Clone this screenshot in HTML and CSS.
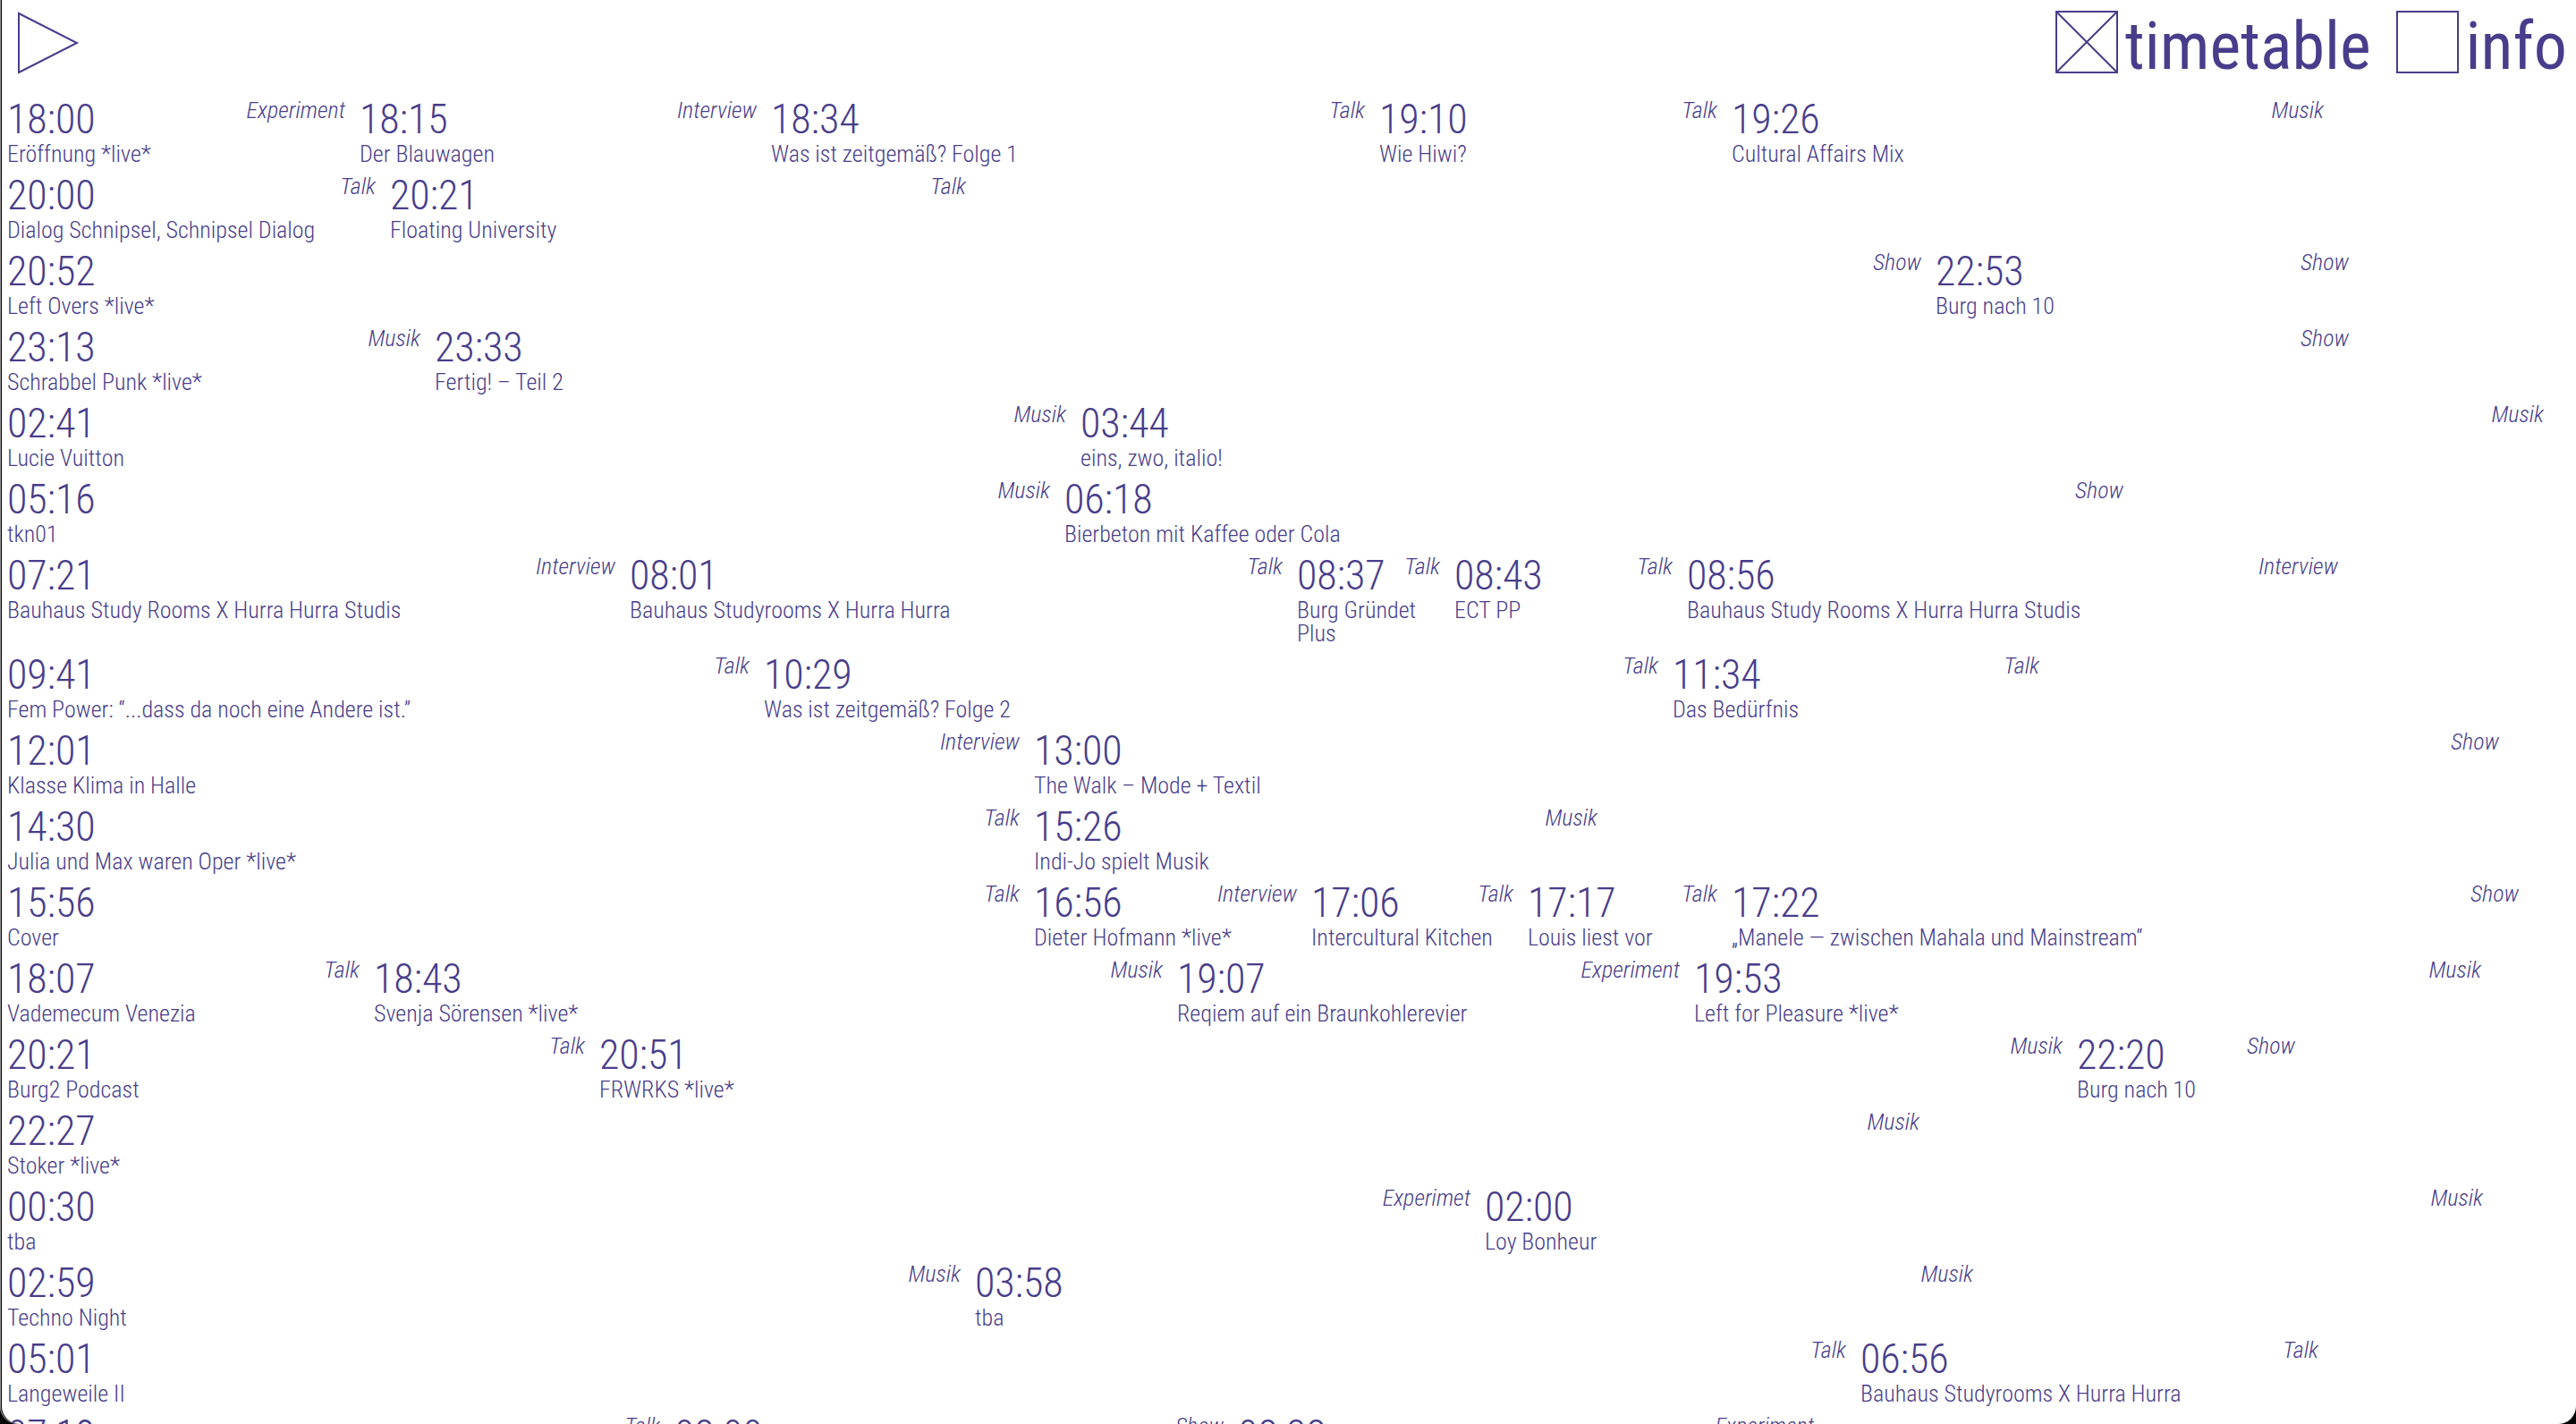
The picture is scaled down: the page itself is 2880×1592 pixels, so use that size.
FILE: index.html
```
<!DOCTYPE html>
<html lang="de">
<head>
<meta charset="utf-8">
<meta name="viewport" content="width=device-width, initial-scale=1">
<title>Timetable</title>
<link rel="stylesheet" href="styles.css">
</head>
<body>
<div class="page">
<header class="header">
  <button class="play" type="button" aria-label="Play">
    <svg class="play-icon" viewBox="0 0 72 72" aria-hidden="true"><path d="M3 3 L68 36 L3 69 Z" fill="none" stroke="currentColor" stroke-width="2"/></svg>
  </button>
  <nav class="nav">
    <label class="toggle"><input class="toggle-box" type="checkbox" checked><span class="toggle-text">timetable</span></label>
    <label class="toggle"><input class="toggle-box" type="checkbox"><span class="toggle-text">info</span></label>
  </nav>
</header>
<main class="timetable">
  <ol class="row">
    <li class="show" style="--span:197"><time class="time">18:00</time><em class="category">Experiment</em><span class="title">Eröffnung *live*</span></li>
    <li class="show" style="--span:230"><time class="time">18:15</time><em class="category">Interview</em><span class="title">Der Blauwagen</span></li>
    <li class="show" style="--span:340"><time class="time">18:34</time><em class="category">Talk</em><span class="title">Was ist zeitgemäß? Folge 1</span></li>
    <li class="show" style="--span:197"><time class="time">19:10</time><em class="category">Talk</em><span class="title">Wie Hiwi?</span></li>
    <li class="show" style="--span:339"><time class="time">19:26</time><em class="category">Musik</em><span class="title">Cultural Affairs Mix</span></li>
  </ol>
  <ol class="row">
    <li class="show" style="--span:214"><time class="time">20:00</time><em class="category">Talk</em><span class="title">Dialog Schnipsel, Schnipsel Dialog</span></li>
    <li class="show" style="--span:330"><time class="time">20:21</time><em class="category">Talk</em><span class="title">Floating University</span></li>
  </ol>
  <ol class="row">
    <li class="show" style="--span:1078"><time class="time">20:52</time><em class="category">Show</em><span class="title">Left Overs *live*</span></li>
    <li class="show" style="--span:239"><time class="time">22:53</time><em class="category">Show</em><span class="title">Burg nach 10</span></li>
  </ol>
  <ol class="row">
    <li class="show" style="--span:239"><time class="time">23:13</time><em class="category">Musik</em><span class="title">Schrabbel Punk *live*</span></li>
    <li class="show" style="--span:1078"><time class="time">23:33</time><em class="category">Show</em><span class="title">Fertig! – Teil 2</span></li>
  </ol>
  <ol class="row">
    <li class="show" style="--span:600"><time class="time">02:41</time><em class="category">Musik</em><span class="title">Lucie Vuitton</span></li>
    <li class="show" style="--span:826"><time class="time">03:44</time><em class="category">Musik</em><span class="title">eins, zwo, italio!</span></li>
  </ol>
  <ol class="row">
    <li class="show" style="--span:591"><time class="time">05:16</time><em class="category">Musik</em><span class="title">tkn01</span></li>
    <li class="show" style="--span:600"><time class="time">06:18</time><em class="category">Show</em><span class="title">Bierbeton mit Kaffee oder Cola</span></li>
  </ol>
  <ol class="row">
    <li class="show" style="--span:348"><time class="time">07:21</time><em class="category">Interview</em><span class="title">Bauhaus Study Rooms X Hurra Hurra Studis</span></li>
    <li class="show" style="--span:373"><time class="time">08:01</time><em class="category">Talk</em><span class="title">Bauhaus Studyrooms X Hurra Hurra</span></li>
    <li class="show" style="--span:88"><time class="time">08:37</time><em class="category">Talk</em><span class="title">Burg Gründet Plus</span></li>
    <li class="show" style="--span:130"><time class="time">08:43</time><em class="category">Talk</em><span class="title">ECT PP</span></li>
    <li class="show" style="--span:372"><time class="time">08:56</time><em class="category">Interview</em><span class="title">Bauhaus Study Rooms X Hurra Hurra Studis</span></li>
  </ol>
  <ol class="row">
    <li class="show" style="--span:423"><time class="time">09:41</time><em class="category">Talk</em><span class="title">Fem Power: “...dass da noch eine Andere ist.”</span></li>
    <li class="show" style="--span:508"><time class="time">10:29</time><em class="category">Talk</em><span class="title">Was ist zeitgemäß? Folge 2</span></li>
    <li class="show" style="--span:213"><time class="time">11:34</time><em class="category">Talk</em><span class="title">Das Bedürfnis</span></li>
  </ol>
  <ol class="row">
    <li class="show" style="--span:574"><time class="time">12:01</time><em class="category">Interview</em><span class="title">Klasse Klima in Halle</span></li>
    <li class="show" style="--span:827"><time class="time">13:00</time><em class="category">Show</em><span class="title">The Walk – Mode + Textil</span></li>
  </ol>
  <ol class="row">
    <li class="show" style="--span:574"><time class="time">14:30</time><em class="category">Talk</em><span class="title">Julia und Max waren Oper *live*</span></li>
    <li class="show" style="--span:323"><time class="time">15:26</time><em class="category">Musik</em><span class="title">Indi-Jo spielt Musik</span></li>
  </ol>
  <ol class="row">
    <li class="show" style="--span:574"><time class="time">15:56</time><em class="category">Talk</em><span class="title">Cover</span></li>
    <li class="show" style="--span:155"><time class="time">16:56</time><em class="category">Interview</em><span class="title">Dieter Hofmann *live*</span></li>
    <li class="show" style="--span:121"><time class="time">17:06</time><em class="category">Talk</em><span class="title">Intercultural Kitchen</span></li>
    <li class="show" style="--span:114"><time class="time">17:17</time><em class="category">Talk</em><span class="title">Louis liest vor</span></li>
    <li class="show" style="--span:448"><time class="time">17:22</time><em class="category">Show</em><span class="title">„Manele — zwischen Mahala und Mainstream“</span></li>
  </ol>
  <ol class="row">
    <li class="show" style="--span:205"><time class="time">18:07</time><em class="category">Talk</em><span class="title">Vademecum Venezia</span></li>
    <li class="show" style="--span:449"><time class="time">18:43</time><em class="category">Musik</em><span class="title">Svenja Sörensen *live*</span></li>
    <li class="show" style="--span:289"><time class="time">19:07</time><em class="category">Experiment</em><span class="title">Reqiem auf ein Braunkohlerevier</span></li>
    <li class="show" style="--span:448"><time class="time">19:53</time><em class="category">Musik</em><span class="title">Left for Pleasure *live*</span></li>
  </ol>
  <ol class="row">
    <li class="show" style="--span:331"><time class="time">20:21</time><em class="category">Talk</em><span class="title">Burg2 Podcast</span></li>
    <li class="show" style="--span:826"><time class="time">20:51</time><em class="category">Musik</em><span class="title">FRWRKS *live*</span></li>
    <li class="show" style="--span:130"><time class="time">22:20</time><em class="category">Show</em><span class="title">Burg nach 10</span></li>
  </ol>
  <ol class="row">
    <li class="show" style="--span:1077"><time class="time">22:27</time><em class="category">Musik</em><span class="title">Stoker *live*</span></li>
  </ol>
  <ol class="row">
    <li class="show" style="--span:826"><time class="time">00:30</time><em class="category">Experimet</em><span class="title">tba</span></li>
    <li class="show" style="--span:566"><time class="time">02:00</time><em class="category">Musik</em><span class="title">Loy Bonheur</span></li>
  </ol>
  <ol class="row">
    <li class="show" style="--span:541"><time class="time">02:59</time><em class="category">Musik</em><span class="title">Techno Night</span></li>
    <li class="show" style="--span:566"><time class="time">03:58</time><em class="category">Musik</em><span class="title">tba</span></li>
  </ol>
  <ol class="row">
    <li class="show" style="--span:1036"><time class="time">05:01</time><em class="category">Talk</em><span class="title">Langeweile II</span></li>
    <li class="show" style="--span:264"><time class="time">06:56</time><em class="category">Talk</em><span class="title">Bauhaus Studyrooms X Hurra Hurra</span></li>
  </ol>
  <ol class="row">
    <li class="show" style="--span:373"><time class="time">07:19</time><em class="category">Talk</em></li>
    <li class="show" style="--span:315"><time class="time">08:00</time><em class="category">Show</em></li>
    <li class="show" style="--span:330"><time class="time">08:38</time><em class="category">Experiment</em></li>
  </ol>
</main>
</div>
</body>
</html>
```
FILE: styles.css
```
* {
  box-sizing: border-box;
}

html {
  background: #000;
}

body {
  margin: 0;
  color: darkslateblue;
  font-family: "Roboto Condensed Light", "Roboto Condensed", Roboto, sans-serif;
  font-weight: 300;
}

.page {
  height: 100vh;
  overflow: hidden;
  background: #fff;
  border-radius: 0 0 20px 20px;
  box-shadow: inset 1px 0 #999, inset 2px 0 #000;
}

.header {
  display: flex;
  justify-content: space-between;
  align-items: flex-start;
  height: 108px;
  padding: 12px 10px 0 18px;
}

.play {
  padding: 0;
  border: 0;
  background: none;
  color: inherit;
  cursor: pointer;
}

.play-icon {
  display: block;
  width: 72px;
  height: 72px;
}

.nav {
  display: flex;
  gap: 28px;
}

.toggle {
  display: flex;
  align-items: flex-start;
  gap: 8px;
  font-family: "Roboto Condensed", Roboto, sans-serif;
  font-weight: 400;
  font-size: 74px;
  line-height: 80px;
  cursor: pointer;
}

.toggle-box {
  appearance: none;
  width: 70px;
  height: 70px;
  margin: 0;
  border: 2px solid darkslateblue;
  cursor: pointer;
}

.toggle-box:checked {
  background: url("data:image/svg+xml,%3Csvg xmlns='http://www.w3.org/2000/svg' viewBox='0 0 66 66'%3E%3Cpath d='M0 0L66 66M66 0L0 66' stroke='darkslateblue' stroke-width='2'/%3E%3C/svg%3E") center / 100% 100% no-repeat;
}

.row {
  display: flex;
  margin: 0 0 8px;
  padding: 0;
  list-style: none;
}

/* One span unit is 1/1440 of the window width. */
.show {
  display: grid;
  grid-template-columns: 1fr auto;
  align-content: start;
  row-gap: 1px;
  flex: none;
  width: calc(var(--span) * 100% / 1440);
  padding: 0 8px;
}

.time {
  font-size: 46px;
  line-height: 50px;
}

.category {
  padding-top: 2px;
  font-size: 26px;
  line-height: 26px;
}

.title {
  grid-column: 1 / -1;
  font-size: 26px;
  line-height: 26px;
}
```
